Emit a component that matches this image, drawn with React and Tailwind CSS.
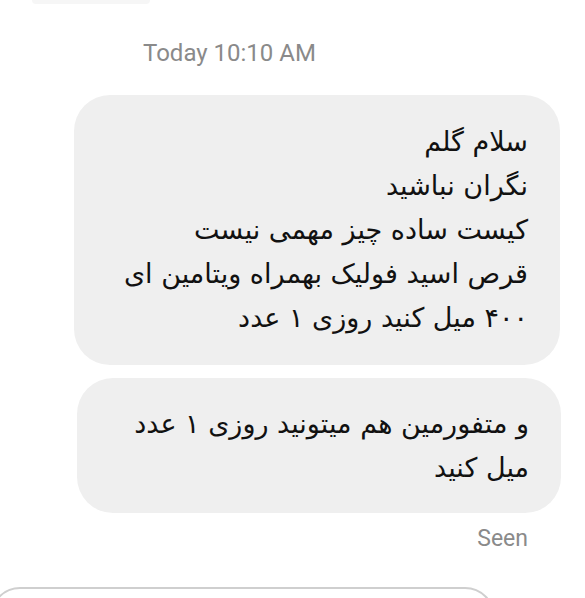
import React from 'react';

const bubbleOne = [
    'سلام گلم',
    'نگران نباشید',
    'کیست ساده چیز مهمی نیست',
    'قرص اسید فولیک بهمراه ویتامین ای',
    '۴۰۰ میل کنید روزی ۱ عدد',
];

const bubbleTwo = [
    'و متفورمین هم میتونید روزی ۱ عدد',
    'میل کنید',
];

function Bubble({ lines, className }) {
    return (
        <div className={`flex flex-col justify-center rounded-[36px] bg-[#efefef] pr-[32px] ${className}`}>
            <div dir="rtl" className="text-right text-[27px] leading-[44px] text-[#111] font-['DejaVu_Sans',sans-serif]">
                {lines.map((line) => (
                    <div key={line} className="whitespace-nowrap">{line}</div>
                ))}
            </div>
        </div>
    );
}

export default function App() {
    return (
        <div className="w-[585px] h-[598px] overflow-hidden bg-white font-['Roboto',sans-serif]">
            {/* bottom edge of the previous element, cut off */}
            <div className="ml-[32px] w-[118px] h-[4px] rounded-b-full bg-[#f6f6f6]" />

            <div className="mt-[35px] ml-[143px] text-[24px] leading-[28px] text-[#8a8a8a]">
                Today 10:10 AM
            </div>

            <Bubble lines={bubbleOne} className="mt-[28px] ml-[74px] w-[486px] h-[270px]" />
            <Bubble lines={bubbleTwo} className="mt-[13px] ml-[77px] w-[484px] h-[135px]" />

            <div className="mt-[12px] w-[528px] text-right text-[23px] leading-[28px] text-[#8a8a8a]">
                Seen
            </div>

            {/* message input, mostly below the fold */}
            <div className="mt-[34px] -ml-[10px] w-[505px] h-[60px] rounded-[34px] border-2 border-[#cfcfcf]" />
        </div>
    );
}
